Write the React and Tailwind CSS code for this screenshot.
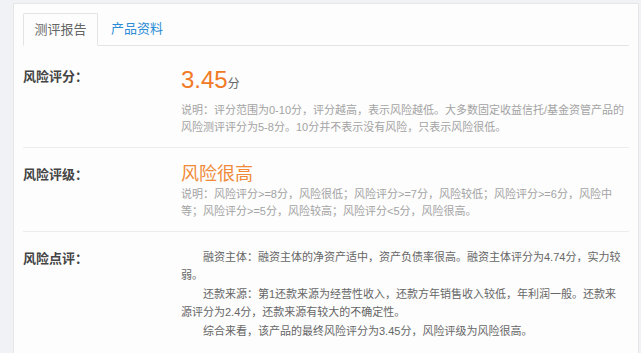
import React from 'react';

const font = { fontFamily: '"Liberation Sans", "Noto Sans CJK SC", sans-serif' };

const Row = ({ label, labelPad, className, children }) => (
  <div className={`flex border-b border-[#ececec] ${className}`}>
    <div className={`w-[158px] shrink-0 text-[13px] font-bold text-[#444] leading-[20px] ${labelPad}`}>{label}</div>
    <div className="flex-1">{children}</div>
  </div>
);

export default function App() {
  return (
    <div style={font} className="h-[353px] overflow-hidden bg-[#f1f2f5] pl-[13px] pr-[2px] pt-[3px]">
      <div className="h-[400px] border border-[#e6e6e6] bg-[#fdfdfd] px-[9px] pt-[9px]">
        {/* tabs */}
        <div className="flex border-b border-[#e4e4e4] h-[33px]">
          <div className="w-[75px] h-[33px] border border-[#e4e4e4] border-b-[#fdfdfd] bg-[#fdfdfd] rounded-t-[2px] flex items-center justify-center text-[13px] text-[#666]">
            测评报告
          </div>
          <div className="pl-[13px] flex items-center text-[13px] text-[#2d8cd6]">产品资料</div>
        </div>

        <Row label="风险评分：" labelPad="pt-[1px]" className="pt-[20px] pb-[11px]">
          <div className="leading-[28px] text-[#f07a26]">
            <span className="text-[24px]">3.45</span>
            <span className="text-[12px] text-[#666]">分</span>
          </div>
          <div className="mt-[4px] text-[11px] leading-[17px] text-[#a3a3a3] whitespace-nowrap">
            <div>说明：评分范围为0-10分，评分越高，表示风险越低。大多数固定收益信托/基金资管产品的</div>
            <div>风险测评评分为5-8分。10分并不表示没有风险，只表示风险很低。</div>
          </div>
        </Row>

        <Row label="风险评级：" labelPad="pt-[3px]" className="pt-[14px] pb-[11px]">
          <div className="text-[18px] leading-[24px] text-[#f08a38]">风险很高</div>
          <div className="text-[11px] leading-[17px] text-[#a3a3a3] whitespace-nowrap">
            <div>说明：风险评分&gt;=8分，风险很低；风险评分&gt;=7分，风险较低；风险评分&gt;=6分，风险中</div>
            <div>等；风险评分&gt;=5分，风险较高；风险评分&lt;5分，风险很高。</div>
          </div>
        </Row>

        <div className="flex pt-[16px]">
          <div className="w-[158px] shrink-0 pt-[1px] text-[13px] font-bold text-[#444] leading-[20px]">风险点评：</div>
          <div className="flex-1 text-[11px] leading-[18.4px] text-[#666] whitespace-nowrap">
            <div className="pl-[22px]">融资主体：融资主体的净资产适中，资产负债率很高。融资主体评分为4.74分，实力较</div>
            <div>弱。</div>
            <div className="pl-[22px]">还款来源：第1还款来源为经营性收入，还款方年销售收入较低，年利润一般。还款来</div>
            <div>源评分为2.4分，还款来源有较大的不确定性。</div>
            <div className="pl-[22px]">综合来看，该产品的最终风险评分为3.45分，风险评级为风险很高。</div>
          </div>
        </div>
      </div>
    </div>
  );
}
